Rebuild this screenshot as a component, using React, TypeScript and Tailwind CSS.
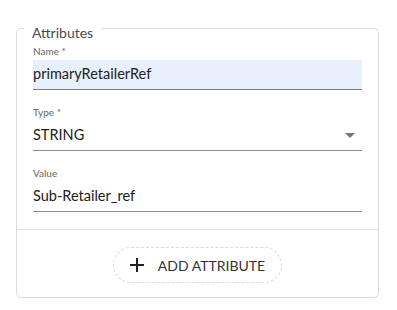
import React from 'react';

type Field = {
  label: string;
  required?: boolean;
  value: string;
  select?: boolean;
  filled?: boolean;
};

const fields: Field[] = [
  { label: 'Name', required: true, value: 'primaryRetailerRef', filled: true },
  { label: 'Type', required: true, value: 'STRING', select: true },
  { label: 'Value', value: 'Sub-Retailer_ref' },
];

function AttributeField({ field, first }: { field: Field; first: boolean }) {
  return (
    <div className={first ? '' : 'mt-4'}>
      <div className="mb-[3px] text-[10px] leading-[12px] text-[#666]">
        {field.label}
        {field.required && ' *'}
      </div>
      <div
        className={`flex h-[30px] items-start border-b pt-[4px] text-[14.5px] leading-[20px] text-[#212121] ${
          field.filled ? 'border-[#7b7e84] bg-[#e8f0fe]' : 'border-[#8c8c8c]'
        }`}
      >
        <span className="flex-1">{field.value}</span>
        {field.select && (
          // dropdown caret
          <svg width="10" height="5" viewBox="0 0 10 5" className="mr-[7px] mt-[8px]">
            <path d="M0 0 L10 0 L5 5 Z" fill="#757575" />
          </svg>
        )}
      </div>
    </div>
  );
}

export default function App() {
  return (
    <div className="min-h-[310px] bg-white pt-[28px] font-['Lato',sans-serif]">
      <div className="relative ml-[16px] w-[363px] rounded-[5px] border border-[#dcdcdc]">
        {/* legend sitting on the border */}
        <span className="absolute left-[7px] top-[-6px] bg-white px-2 text-[14px] leading-[20px] text-[#4a4a4a]">
          Attributes
        </span>

        <div className="px-4 pb-[17px] pt-[16px]">
          {fields.map((f, i) => (
            <AttributeField key={f.label} field={f} first={i === 0} />
          ))}
        </div>

        <div className="flex justify-center border-t border-[#e0e0e0] pb-[14px] pt-[17px]">
          <button className="flex h-[36px] items-center gap-[14px] rounded-full border border-dashed border-[#dadada] pl-4 pr-[16px] text-[14px] text-[#333]">
            <svg width="14" height="14" viewBox="0 0 14 14">
              <path d="M7 0 V14 M0 7 H14" stroke="#222" strokeWidth="2" />
            </svg>
            ADD ATTRIBUTE
          </button>
        </div>
      </div>
    </div>
  );
}
